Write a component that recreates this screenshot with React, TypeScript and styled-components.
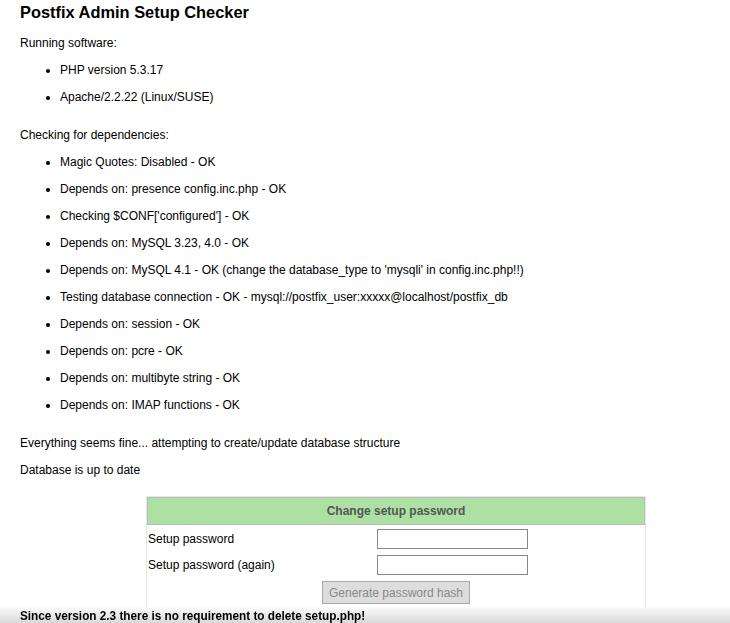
import React from "react";
import styled, { createGlobalStyle } from "styled-components";

// ==================== STYLES ====================
const GlobalStyle = createGlobalStyle`
  html, body {
    margin: 0;
    padding: 0;
    background: #fff;
  }
  body {
    font-family: "Liberation Sans", Arial, sans-serif;
    font-size: 12px;
    color: #000;
  }
`;

const Page = styled.div`
  padding: 2px 20px 40px;
`;

const Title = styled.h1`
  font-size: 16.4px;
  font-weight: 700;
  line-height: 20px;
  margin: 0;
`;

const Para = styled.p<{ $gap?: number }>`
  margin: ${({ $gap }) => $gap ?? 13}px 0 0;
  line-height: 14px;
`;

const List = styled.ul`
  margin: 0;
  padding-left: 40px;
`;

const Item = styled.li`
  margin-top: 13px;
  line-height: 14px;
`;

const SetupTable = styled.table`
  margin: 19px 0 0 126px;
  width: 500px;
  border: 1px solid #e6e6e6;
  border-spacing: 0;
  font-size: 12px;
`;

const HeadCell = styled.th`
  height: 26px;
  padding: 0;
  background: #ade0a3;
  border: 1px solid #bbbbbb;
  color: #555;
  font-weight: 700;
  text-align: center;
`;

const Row = styled.tr<{ $h: number }>`
  height: ${({ $h }) => $h}px;
`;

const LabelCell = styled.td`
  width: 229px;
  padding: 0 0 0 1px;
  vertical-align: middle;
`;

const FieldCell = styled.td<{ $center?: boolean }>`
  padding: 0;
  text-align: ${({ $center }) => ($center ? "center" : "left")};
  vertical-align: middle;
`;

const PassInput = styled.input`
  box-sizing: border-box;
  width: 151px;
  height: 20px;
  margin: 0;
  border: 1px solid #888;
  padding: 1px 3px;
  font-size: 12px;
  background: #fff;
`;

const HashButton = styled.button`
  box-sizing: border-box;
  width: 148px;
  height: 23px;
  padding: 0 4px;
  background: #dddddd;
  border: 1px solid #aaaaaa;
  border-radius: 0;
  color: #888;
  font-family: "Liberation Sans", Arial, sans-serif;
  font-size: 12px;
`;

const Footer = styled.div`
  position: fixed;
  left: 0;
  right: 0;
  bottom: 0;
  height: 16px;
  padding-left: 20px;
  background: linear-gradient(#fbfbfb, #d9d9d9);
  font-family: "Liberation Sans", Arial, sans-serif;
  font-size: 13px;
  font-weight: 700;
  line-height: 17px;
  color: #000;
`;

// police condensée (Arial Narrow absente)
const NarrowText = styled.span`
  display: inline-block;
  transform: scaleX(0.905);
  transform-origin: left center;
  white-space: nowrap;
`;

// ==================== DATA ====================
const software = ["PHP version 5.3.17", "Apache/2.2.22 (Linux/SUSE)"];

const dependencies = [
  "Magic Quotes: Disabled - OK",
  "Depends on: presence config.inc.php - OK",
  "Checking $CONF['configured'] - OK",
  "Depends on: MySQL 3.23, 4.0 - OK",
  "Depends on: MySQL 4.1 - OK (change the database_type to 'mysqli' in config.inc.php!!)",
  "Testing database connection - OK - mysql://postfix_user:xxxxx@localhost/postfix_db",
  "Depends on: session - OK",
  "Depends on: pcre - OK",
  "Depends on: multibyte string - OK",
  "Depends on: IMAP functions - OK",
];

// ==================== COMPOSANT ====================
const App: React.FC = () => {
  return (
    <Page>
      <GlobalStyle />
      <Title>Postfix Admin Setup Checker</Title>

      <Para $gap={14}>Running software:</Para>
      <List>
        {software.map((s) => (
          <Item key={s}>{s}</Item>
        ))}
      </List>

      <Para $gap={24}>Checking for dependencies:</Para>
      <List>
        {dependencies.map((d) => (
          <Item key={d}>{d}</Item>
        ))}
      </List>

      <Para $gap={24}>Everything seems fine... attempting to create/update database structure</Para>
      <Para>Database is up to date</Para>

      {/* Formulaire mot de passe */}
      <SetupTable>
        <tbody>
          <tr>
            <HeadCell colSpan={2}>Change setup password</HeadCell>
          </tr>
          <Row $h={27}>
            <LabelCell>Setup password</LabelCell>
            <FieldCell>
              <PassInput type="password" />
            </FieldCell>
          </Row>
          <Row $h={26}>
            <LabelCell>Setup password (again)</LabelCell>
            <FieldCell>
              <PassInput type="password" />
            </FieldCell>
          </Row>
          <Row $h={29}>
            <FieldCell colSpan={2} $center>
              <HashButton disabled>Generate password hash</HashButton>
            </FieldCell>
          </Row>
        </tbody>
      </SetupTable>

      <Footer>
        <NarrowText>Since version 2.3 there is no requirement to delete setup.php!</NarrowText>
      </Footer>
    </Page>
  );
};

export default App;
